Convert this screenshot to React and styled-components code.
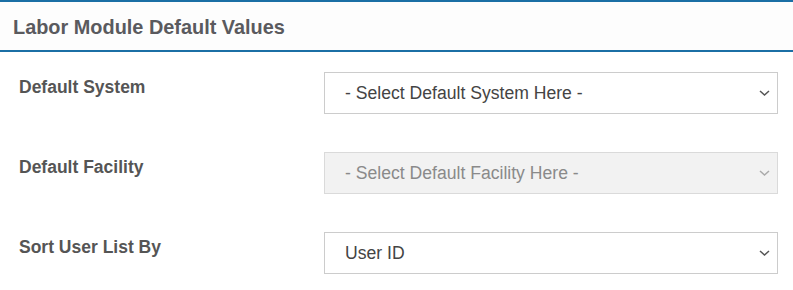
import React from 'react'
import styled, { createGlobalStyle } from 'styled-components'

const GlobalStyle = createGlobalStyle`
    body {
        margin: 0;
        background: #fff;
        font-family: "Liberation Sans", Arial, sans-serif;
    }
`

const Panel = styled.section`
    width: 793px;
    border-top: 2px solid #1b6fa5;
    background: #fff;
`

const PanelHeader = styled.header`
    display: flex;
    align-items: center;
    padding: 0 13px;
    background: #fdfdfd;
    border-bottom: 2px solid #1b6fa5;
    box-sizing: border-box;
    height: 50px;
`

const Title = styled.h3`
    margin: 0;
    font-size: 19.9px;
    font-weight: 700;
    color: #5a5a5e;
    padding-top: 2px;
`

const Body = styled.div`
    padding: 20px 15px 0 19px;
    display: grid;
    grid-template-columns: 305px 1fr;
    row-gap: 38px;
`

const Label = styled.label`
    font-size: 17.5px;
    font-weight: 700;
    color: #555;
    padding-top: 5px;
`

const SelectWrap = styled.div`
    position: relative;
`

const Select = styled.select`
    appearance: none;
    width: 100%;
    height: 42px;
    padding: 0 40px 0 20px;
    font-family: "Liberation Sans", Arial, sans-serif;
    font-size: 17.6px;
    color: ${p => (p.disabled ? '#8a8a8a' : '#444')};
    background: ${p => (p.disabled ? '#f2f2f2' : '#fff')};
    border: 1px solid ${p => (p.disabled ? '#dadada' : '#ccc')};
    border-radius: 0;
    outline: none;
    opacity: 1;
`

const Chevron = styled.svg`
    position: absolute;
    right: 8px;
    top: 50%;
    margin-top: -3px;
    pointer-events: none;
`

const fields = [
    { label: 'Default System', value: '- Select Default System Here -' },
    { label: 'Default Facility', value: '- Select Default Facility Here -', disabled: true },
    { label: 'Sort User List By', value: 'User ID' },
]

export default function App() {
    return (
        <>
            <GlobalStyle />
            <Panel>
                <PanelHeader>
                    <Title>Labor Module Default Values</Title>
                </PanelHeader>
                <Body>
                    {fields.map(f => (
                        <React.Fragment key={f.label}>
                            <Label>{f.label}</Label>
                            <SelectWrap>
                                <Select disabled={f.disabled} defaultValue={f.value}>
                                    <option>{f.value}</option>
                                </Select>
                                <Chevron width="11" height="6" viewBox="0 0 11 6">
                                    <path
                                        d="M1 1l4.5 4 4.5-4"
                                        fill="none"
                                        stroke={f.disabled ? '#aaa' : '#555'}
                                        strokeWidth="1.5"
                                    />
                                </Chevron>
                            </SelectWrap>
                        </React.Fragment>
                    ))}
                </Body>
            </Panel>
        </>
    )
}
